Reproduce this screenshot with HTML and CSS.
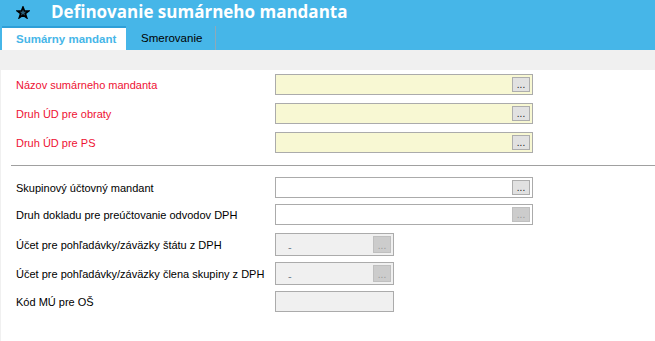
FILE: index.html
```html
<!DOCTYPE html>
<html>
<head>
<meta charset="utf-8">
<link rel="stylesheet" href="styles.css">
</head>
<body>
<div class="header">
  <div class="titlebar">
    <svg class="star" width="14" height="13" viewBox="0 0 14 13">
      <polygon points="7,1.2 8.5,5 12.6,5 9.3,7.5 10.6,11.6 7,9.1 3.4,11.6 4.7,7.5 1.4,5 5.5,5" fill="#2a5f7a" stroke="#000" stroke-width="1.7" stroke-linejoin="miter"/>
    </svg>
    <span class="title">Definovanie sumárneho mandanta</span>
  </div>
  <div class="tabs">
    <div class="tab active">Sumárny mandant</div>
    <div class="tab">Smerovanie</div>
  </div>
</div>
<div class="strip"></div>
<div class="panel">
  <div class="section s1">
    <div class="row">
      <div class="label req">Názov sumárneho mandanta</div>
      <div class="field long yellow"><span class="btn">...</span></div>
    </div>
    <div class="row">
      <div class="label req">Druh ÚD pre obraty</div>
      <div class="field long yellow"><span class="btn">...</span></div>
    </div>
    <div class="row">
      <div class="label req">Druh ÚD pre PS</div>
      <div class="field long yellow"><span class="btn">...</span></div>
    </div>
  </div>
  <div class="sep"></div>
  <div class="section s2">
    <div class="row">
      <div class="label">Skupinový účtovný mandant</div>
      <div class="field long"><span class="btn">...</span></div>
    </div>
    <div class="row r2">
      <div class="label">Druh dokladu pre preúčtovanie odvodov DPH</div>
      <div class="field long"><span class="btn off">...</span></div>
    </div>
    <div class="row tall r3">
      <div class="label">Účet pre pohľadávky/záväzky štátu z DPH</div>
      <div class="field short grey"><span class="dash">-</span><span class="btn off tallbtn">...</span></div>
    </div>
    <div class="row tall r4">
      <div class="label">Účet pre pohľadávky/záväzky člena skupiny z DPH</div>
      <div class="field short grey"><span class="dash">-</span><span class="btn off tallbtn">...</span></div>
    </div>
    <div class="row r5">
      <div class="label">Kód MÚ pre OŠ</div>
      <div class="field short grey"></div>
    </div>
  </div>
</div>
</body>
</html>
```
FILE: styles.css
```css
* { box-sizing: border-box; }
html, body { margin: 0; padding: 0; }
body {
  width: 655px;
  height: 341px;
  overflow: hidden;
  background: #f0f0f0;
  font-family: "Liberation Sans", Arial, sans-serif;
  font-size: 11px;
}
.header {
  background: #46b6e8;
  height: 50px;
}
.titlebar {
  height: 26px;
  display: flex;
  align-items: center;
  padding-left: 16px;
}
.star { display: block; margin-top: -1px; }
.title {
  margin-left: 21px;
  color: #fff;
  font-family: "Open Sans", "DejaVu Sans", sans-serif;
  font-weight: bold;
  font-size: 17px;
  line-height: 26px;
  margin-top: -2px;
}
.tabs {
  display: flex;
  height: 24px;
  padding-left: 2px;
}
.tab {
  height: 24px;
  width: 90px;
  padding-left: 15px;
  display: flex;
  align-items: center;
  white-space: nowrap;
  color: #000;
  border-right: 1px solid #8fa9b8;
  font-size: 11.5px;
}
.tab.active {
  width: 124px;
  background: #fff;
  color: #46b6e8;
  font-weight: bold;
  border-right: none;
  border-top: 2px solid #2d9fd8;
  padding-left: 14px;
  font-size: 11.5px;
}
.strip { height: 20px; }
.panel {
  background: #fff;
  margin-left: 1px;
  height: 271px;
  padding-top: 4px;
}
.section { display: flex; flex-direction: column; }
.s1 { gap: 8px; }
.row {
  display: flex;
  align-items: center;
  height: 21px;
}
.row.tall { height: 23px; }
.r2 { margin-top: 6px; }
.r3 { margin-top: 8px; }
.r4 { margin-top: 6px; }
.r5 { margin-top: 6px; }
.label {
  width: 274px;
  padding-left: 15px;
  color: #000;
  white-space: nowrap;
}
.label.req { color: #ee1133; }
.field {
  height: 100%;
  border: 1px solid #ababab;
  background: #fff;
  position: relative;
  display: flex;
  align-items: center;
}
.field.long { width: 258px; }
.field.short { width: 119px; }
.field.yellow { background: #f8f8d3; }
.field.grey { background: #f0f0f0; }
.btn {
  position: absolute;
  right: 2px;
  top: 2px;
  width: 18px;
  height: 15px;
  background: #e1e1e1;
  border: 1px solid #adadad;
  font-size: 10px;
  line-height: 14px;
  text-align: center;
  color: #222;
}
.btn.off {
  background: #cccccc;
  border-color: #bfbfbf;
  color: #9a9a9a;
}
.btn.tallbtn { height: 17px; line-height: 17px; }
.dash {
  margin-left: 12px;
  color: #6d7d8d;
  font-size: 11px;
  margin-top: 4px;
}
.sep {
  height: 1px;
  background: #a0a0a0;
  margin: 12px 0 11px 10px;
}
```
